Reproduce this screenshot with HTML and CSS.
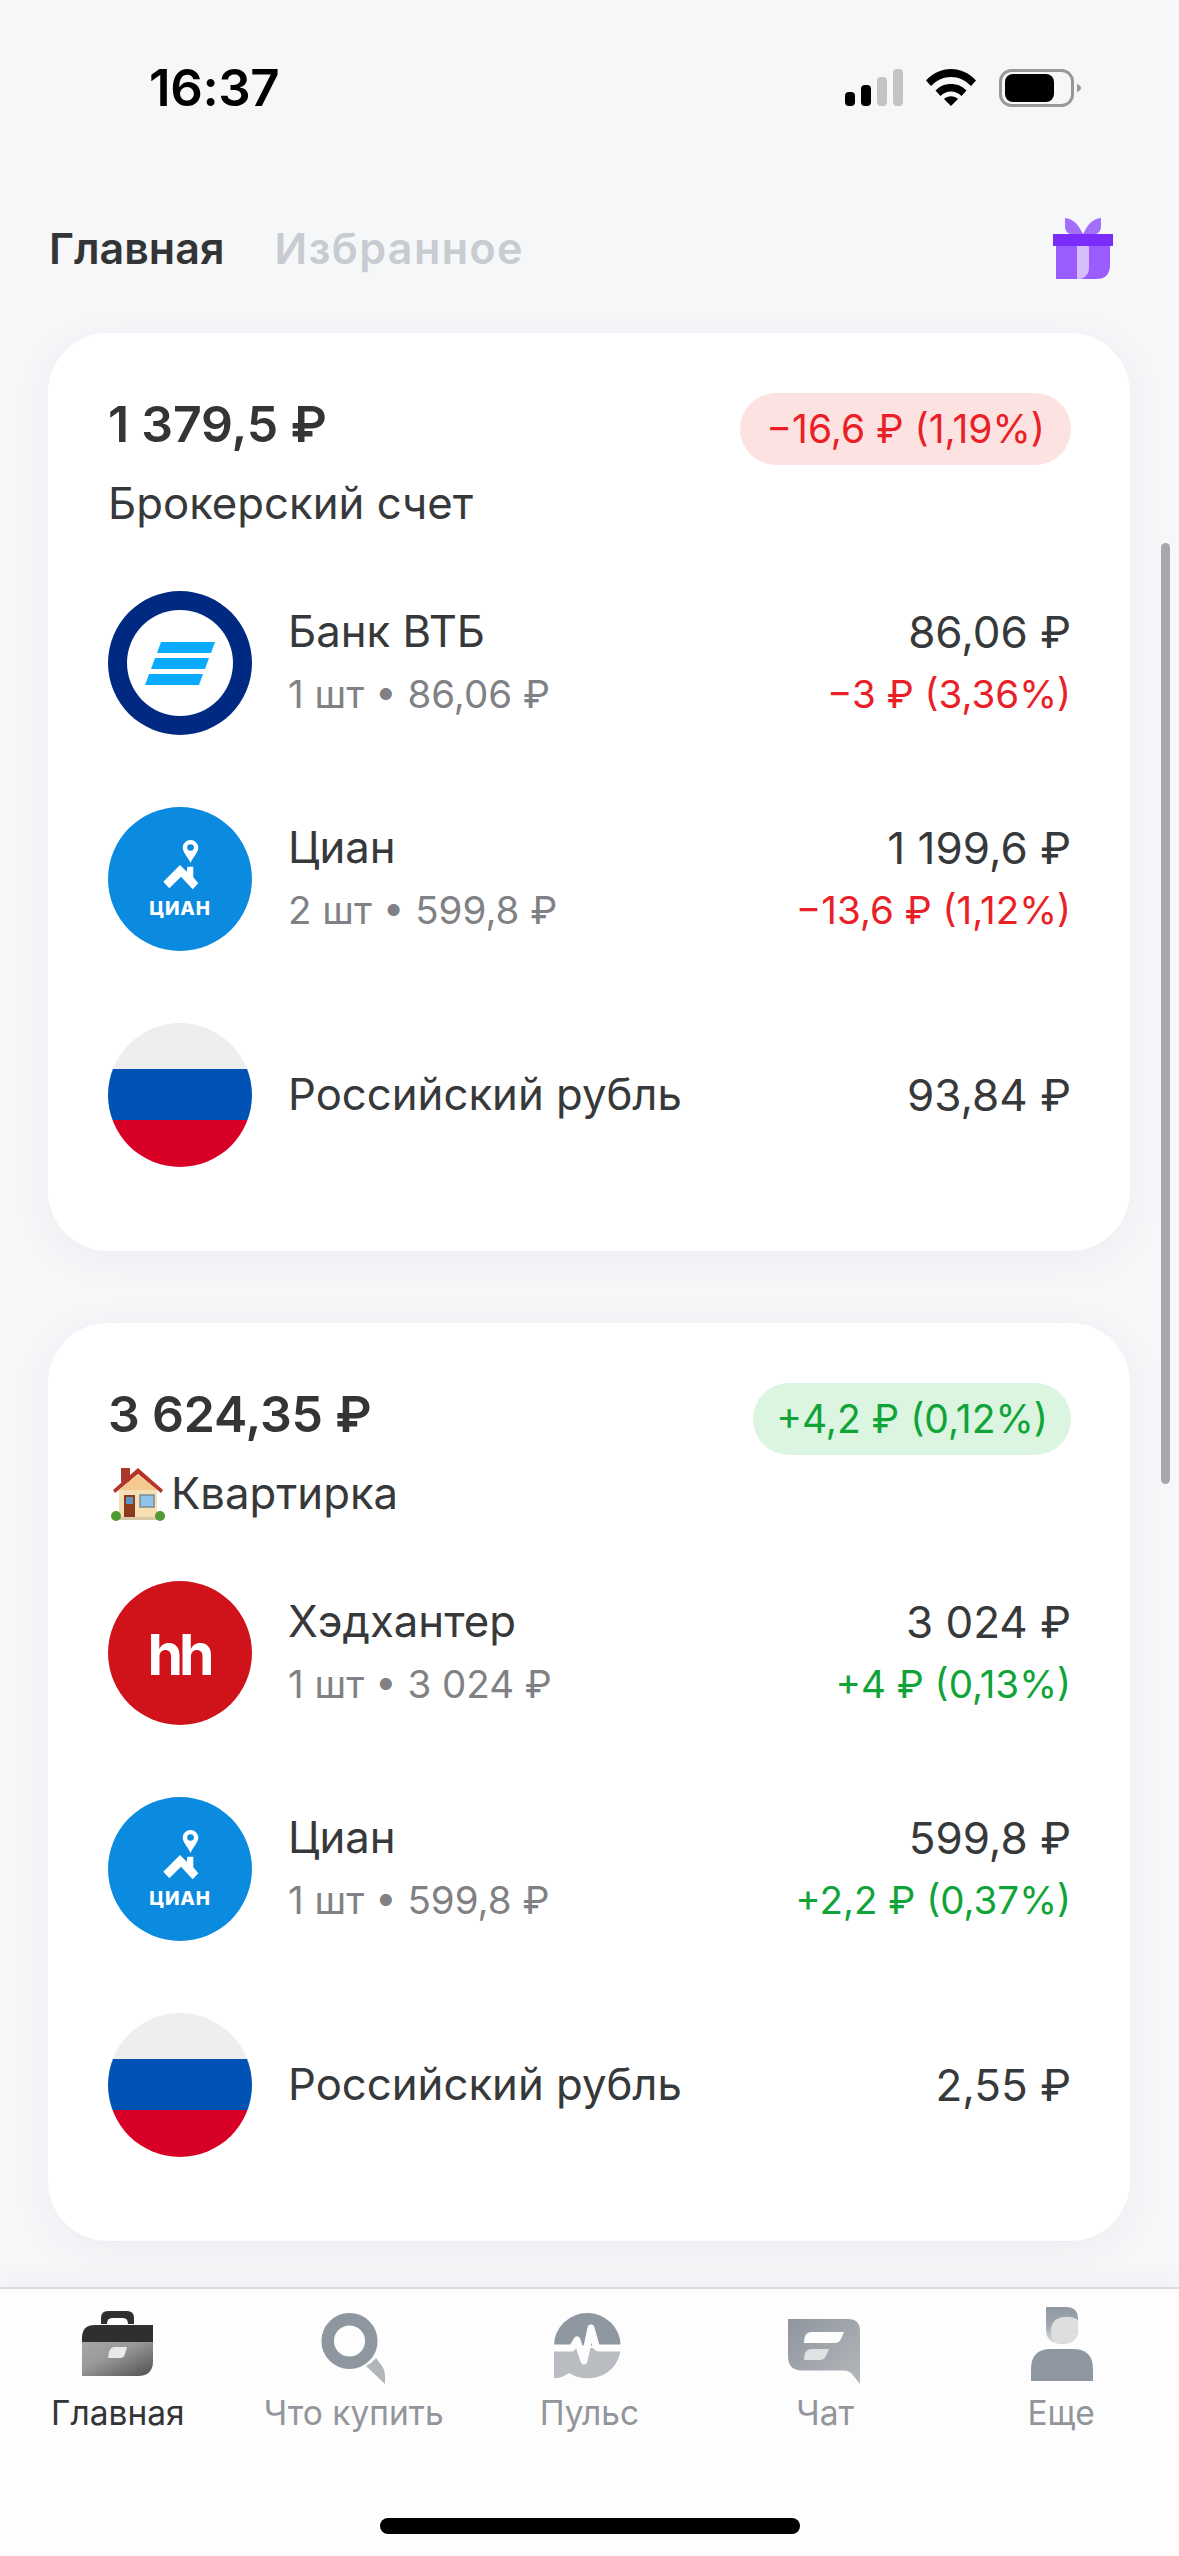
FILE: index.html
```html
<!DOCTYPE html>
<html lang="ru">
<head>
<meta charset="utf-8">
<title>Главная</title>
<link rel="stylesheet" href="styles.css">
</head>
<body>
<div class="app">
  <header class="status">
    <span class="time">16:37</span>
    <div class="status-icons">
      <svg class="signal" width="58" height="37" viewBox="0 0 58 37"><rect x="0" y="23" width="10" height="14" rx="4" fill="#000"/><rect x="16" y="16" width="10" height="21" rx="4" fill="#000"/><rect x="32" y="8" width="10" height="29" rx="4" fill="#c4c4c6"/><rect x="48" y="0" width="10" height="37" rx="4" fill="#c4c4c6"/></svg>
      <svg class="wifi" width="50" height="37" viewBox="0 0 50 37"><path d="M0 11.5C7 4 15.500 0 25 0s18 4 25 11.500l-5 5.500C39 11 32.500 8 25 8S11 11 5 17z" fill="#000"/><path d="M9.500 21.500C14 17 19 15 25 15s11 2 15.500 6.500l-5 5.500C32.500 24 29 22.500 25 22.500S17.500 24 14.500 27z" fill="#000"/><path d="M18 30c2-1.700 4.300-2.700 7-2.700s5 1 7 2.700l-7 7z" fill="#000"/></svg>
      <svg class="battery" width="82" height="38" viewBox="0 0 82 38"><rect x="1.500" y="1.500" width="72" height="35" rx="11" fill="none" stroke="#98989b" stroke-width="3"/><rect x="6" y="5" width="49" height="28" rx="8" fill="#000"/><path d="M78 15q4 1.500 4 4t-4 4z" fill="#98989b"/></svg>
    </div>
  </header>

  <nav class="tabs">
    <span class="tab tab-active">Главная</span>
    <span class="tab tab-muted">Избранное</span>
    <svg class="gift" width="60" height="61" viewBox="0 0 60 61"><path d="M12 0c5 0 11 4 14 9l4 7H18C14 16 12 12 12 8zM48 0c-5 0-11 4-14 9l-4 7h12c4 0 6-4 6-8z" fill="#a26ffb"/><path d="M3 28h54v19q0 14-14 14H3z" fill="#9a5bff"/><rect x="24" y="28" width="12" height="33" fill="#d6bdfd"/><path d="M36 28v22q0 8-8 11h9q2-1 2-4V28z" fill="#9a5bff"/><rect x="0" y="16" width="60" height="12" fill="#7b2cfb"/></svg>
  </nav>

  <main class="feed">
    <section class="card">
      <div class="card-head">
        <div class="head-main">
          <div class="total">1 379,5 ₽</div>
          <div class="label">Брокерский счет</div>
        </div>
        <span class="badge badge-red">−16,6 ₽ (1,19%)</span>
      </div>
      <div class="rows">
        <div class="row">
          <svg class="logo" viewBox="0 0 144 144"><circle cx="72" cy="72" r="72" fill="#002a82"/><circle cx="72" cy="72" r="53" fill="#fff"/><path d="M53 51h54l-4 11H49zM47 67h54l-4 11H43zM41 83h54l-4 11H37z" fill="#0aabff"/></svg>
          <div class="info"><div class="name">Банк ВТБ</div><div class="sub">1 шт • 86,06 ₽</div></div>
          <div class="nums"><div class="value">86,06 ₽</div><div class="delta red">−3 ₽ (3,36%)</div></div>
        </div>
        <div class="row">
          <svg class="logo" viewBox="0 0 144 144"><circle cx="72" cy="72" r="72" fill="#0a8be0"/><path d="M82.500 33a7.800 7.800 0 0 1 7.800 7.800c0 5-5.300 9-7.800 15.200-2.500-6.200-7.800-10.200-7.800-15.200a7.800 7.800 0 0 1 7.800-7.800z" fill="#fff"/><circle cx="82.500" cy="40.500" r="3.300" fill="#0a8be0"/><path d="M55.300 74.700L72 58l6.700 6.700.6-5h6v10.600l5 6-5.600 6L73 69.700 61.300 81.300z" fill="#fff"/><text class="cian-text" x="72" y="108" text-anchor="middle">ЦИАН</text></svg>
          <div class="info"><div class="name">Циан</div><div class="sub">2 шт • 599,8 ₽</div></div>
          <div class="nums"><div class="value">1 199,6 ₽</div><div class="delta red">−13,6 ₽ (1,12%)</div></div>
        </div>
        <div class="row">
          <svg class="logo" viewBox="0 0 144 144"><clipPath id="f1"><circle cx="72" cy="72" r="72"/></clipPath><g clip-path="url(#f1)"><rect width="144" height="46" fill="#eeeeee"/><rect y="46" width="144" height="51" fill="#0052b4"/><rect y="97" width="144" height="47" fill="#d80027"/></g></svg>
          <div class="info"><div class="name">Российский рубль</div></div>
          <div class="nums"><div class="value">93,84 ₽</div></div>
        </div>
      </div>
    </section>

    <section class="card">
      <div class="card-head">
        <div class="head-main">
          <div class="total">3 624,35 ₽</div>
          <div class="label label-icon"><svg class="house" width="56" height="54" viewBox="0 0 56 54"><rect x="11" y="1" width="9" height="14" fill="#a8392b"/><rect x="9" y="22" width="38" height="28" fill="#f6dfb4"/><path d="M28 1L3 23l2 3L28 7l23 19 2-3z" fill="#b5342a"/><path d="M28 7L9 23h38z" fill="#f3c98e"/><rect x="14" y="28" width="11" height="22" fill="#8a3b1c"/><rect x="16" y="30" width="7" height="7" fill="#5f94c8"/><rect x="30" y="28" width="14" height="12" fill="#8fc3ea" stroke="#7c8a94" stroke-width="1.500"/><rect x="9" y="50" width="38" height="3" fill="#d9c8a6"/><circle cx="6" cy="49" r="5" fill="#4f9a33"/><circle cx="50" cy="49" r="5" fill="#4f9a33"/></svg><span>Квартирка</span></div>
        </div>
        <span class="badge badge-green">+4,2 ₽ (0,12%)</span>
      </div>
      <div class="rows">
        <div class="row">
          <svg class="logo" viewBox="0 0 144 144"><circle cx="72" cy="72" r="72" fill="#d0121b"/><text class="hh-text" x="71" y="94" text-anchor="middle">hh</text></svg>
          <div class="info"><div class="name">Хэдхантер</div><div class="sub">1 шт • 3 024 ₽</div></div>
          <div class="nums"><div class="value">3 024 ₽</div><div class="delta green">+4 ₽ (0,13%)</div></div>
        </div>
        <div class="row">
          <svg class="logo" viewBox="0 0 144 144"><circle cx="72" cy="72" r="72" fill="#0a8be0"/><path d="M82.500 33a7.800 7.800 0 0 1 7.800 7.800c0 5-5.300 9-7.800 15.200-2.500-6.200-7.800-10.200-7.800-15.200a7.800 7.800 0 0 1 7.800-7.800z" fill="#fff"/><circle cx="82.500" cy="40.500" r="3.300" fill="#0a8be0"/><path d="M55.300 74.700L72 58l6.700 6.700.6-5h6v10.600l5 6-5.600 6L73 69.700 61.300 81.300z" fill="#fff"/><text class="cian-text" x="72" y="108" text-anchor="middle">ЦИАН</text></svg>
          <div class="info"><div class="name">Циан</div><div class="sub">1 шт • 599,8 ₽</div></div>
          <div class="nums"><div class="value">599,8 ₽</div><div class="delta green">+2,2 ₽ (0,37%)</div></div>
        </div>
        <div class="row">
          <svg class="logo" viewBox="0 0 144 144"><clipPath id="f2"><circle cx="72" cy="72" r="72"/></clipPath><g clip-path="url(#f2)"><rect width="144" height="46" fill="#eeeeee"/><rect y="46" width="144" height="51" fill="#0052b4"/><rect y="97" width="144" height="47" fill="#d80027"/></g></svg>
          <div class="info"><div class="name">Российский рубль</div></div>
          <div class="nums"><div class="value">2,55 ₽</div></div>
        </div>
      </div>
    </section>
  </main>

  <div class="scrollbar"></div>

  <footer class="tabbar">
    <div class="tb-item tb-active">
      <svg class="tb-icon" viewBox="0 0 90 84"><defs><linearGradient id="g1" x1="0" y1="0" x2="1" y2="1"><stop offset="0" stop-color="#a6a6a6"/><stop offset="0.4" stop-color="#999"/><stop offset="1" stop-color="#505050"/></linearGradient></defs><path d="M28 16v-6q0-7 7-7h19q7 0 7 7v6h-6q0-6-5-6H39q-5 0-5 6z" fill="#2e2f31"/><path d="M9 34v-4q0-13 13-13h58v17z" fill="#2e2f31"/><path d="M9 34h71v19q0 15-15 15H9z" fill="url(#g1)"/><path d="M41 39h13l-2 7q-1 4-5 4H35q1-11 6-11z" fill="#e8e9ea"/></svg>
      <span>Главная</span>
    </div>
    <div class="tb-item">
      <svg class="tb-icon" viewBox="0 0 90 84"><path d="M57 58q6-3 10-8l6 8q3 4 3 9v9z" fill="#b0b5ba"/><circle cx="40.500" cy="33" r="21.800" fill="none" stroke="#8e969f" stroke-width="12.500"/></svg>
      <span>Что купить</span>
    </div>
    <div class="tb-item">
      <svg class="tb-icon" viewBox="0 0 90 84"><path d="M10 37.500a33.300 32.500 0 0 1 66.600 0z" fill="#8f98a1"/><path d="M10 40h66.600c-1 18-15 30.300-33 30.300-7 0-13-2-18.600-5.300-5 3.500-10 5.300-15 5.300z" fill="#b9bdc2"/><path d="M9 40h19l5-8 7 21 7-33 5 18q1 2 4 2h22" fill="none" stroke="#fdfdfe" stroke-width="7" stroke-linejoin="round"/></svg>
      <span>Пульс</span>
    </div>
    <div class="tb-item">
      <svg class="tb-icon" viewBox="0 0 90 84"><defs><linearGradient id="g2" x1="0" y1="0" x2="1" y2="1"><stop offset="0" stop-color="#8f969e"/><stop offset="1" stop-color="#b3b7bb"/></linearGradient></defs><path d="M8 11h60q12 0 12 12v53l-8-10q-3-3.500-8-3.500H22Q8 62.500 8 48z" fill="url(#g2)"/><path d="M31 24h33l-3 7q-2 4-6 4H24q0-11 7-11z" fill="#fdfdfe"/><path d="M31 41h18l-3 7q-2 4-6 4H24q0-11 7-11z" fill="#dfe1e3"/></svg>
      <span>Чат</span>
    </div>
    <div class="tb-item">
      <svg class="tb-icon tb-overflow" viewBox="0 0 90 84"><defs><linearGradient id="g3" x1="0" y1="0" x2="0" y2="1"><stop offset="0" stop-color="#8f98a1"/><stop offset="0.5" stop-color="#a0a7ae"/><stop offset="1" stop-color="#dfe1e3"/></linearGradient></defs><path d="M30 -1h20q12 0 12 12v10q0 15-16 15T30 21z" fill="url(#g3)"/><path d="M35 21q1-11 13-12 8-1 14 3v9q0 15-16 15-11 0-11-11z" fill="#dcdee0"/><path d="M15 73V61q0-20 20-20h22q20 0 20 20v12z" fill="#8f98a1"/></svg>
      <span>Еще</span>
    </div>
    <div class="home-bar"></div>
  </footer>
</div>
</body>
</html>
```
FILE: styles.css
```css
* { box-sizing: border-box; }
html, body { margin: 0; padding: 0; }
body {
  width: 1179px;
  height: 2556px;
  overflow: hidden;
  background: #f6f7f9;
  font-family: Inter, "Noto Sans", "Liberation Sans", sans-serif;
  color: #333436;
}
.app { position: relative; display: flex; flex-direction: column; height: 2556px; }

.status { display: flex; justify-content: space-between; align-items: center; height: 175px; padding: 0 98px 0 149px; }
.time { font-size: 51px; font-weight: 600; color: #000; letter-spacing: -0.4px; }
.status-icons { display: flex; align-items: center; gap: 23px; }

.tabs { display: flex; align-items: center; gap: 50px; height: 100px; margin-top: 23px; padding: 0 66px 0 49px; }
.tab { font-size: 43px; font-weight: 600; color: #c8cbcf; }
.tab-active { color: #333436; }
.tab-muted { letter-spacing: 1.4px; }
.gift { margin-left: auto; }

.feed { flex: 1; min-height: 0; overflow: hidden; display: flex; flex-direction: column; gap: 72px; padding: 35px 49px 0 48px; }
.card { background: #fff; border-radius: 60px; padding: 60px 59px 84px 60px; box-shadow: 0 8px 40px rgba(40, 50, 70, 0.05); flex: none; }
.card-head { display: flex; justify-content: space-between; align-items: flex-start; margin-bottom: 57px; }
.total { font-size: 50px; font-weight: 600; line-height: 63px; letter-spacing: -0.2px; }
.label { font-size: 43.7px; line-height: 60px; margin-top: 18px; color: #37383a; }
.label-icon { display: flex; align-items: center; gap: 5px; margin-left: 2px; }
.house { flex: none; }
.badge { font-size: 39px; height: 72px; line-height: 72px; padding: 0 26px; border-radius: 36px; }
.badge-red { background: #fde2e2; color: #ea2027; }
.badge-green { background: #dcf5e0; color: #10a337; padding: 0 23px; }

.rows { display: flex; flex-direction: column; gap: 72px; }
.row { display: flex; align-items: center; gap: 36px; height: 144px; }
.logo { width: 144px; height: 144px; flex: none; }
.info { flex: 1; min-width: 0; }
.name { font-size: 43.7px; line-height: 62px; color: #37383a; }
.sub { font-size: 38.5px; line-height: 62px; color: #7f8184; }
.nums { text-align: right; }
.value { font-size: 44px; line-height: 62px; color: #37383a; }
.delta { font-size: 38.5px; line-height: 62px; }
.red { color: #ea2027; }
.green { color: #10a337; }
.cian-text { font-family: Inter, sans-serif; font-size: 19px; font-weight: 800; fill: #fff; letter-spacing: 0.8px; }
.hh-text { font-family: Inter, sans-serif; font-size: 57px; font-weight: 700; fill: #fff; letter-spacing: -4px; }

.scrollbar { position: absolute; left: 1161px; top: 543px; width: 9px; height: 941px; border-radius: 5px; background: #a6a8ab; }

.tabbar { position: relative; flex: none; height: 269px; display: grid; grid-template-columns: repeat(5, 1fr); align-items: start; border-top: 2px solid #dadbdd; background: #fdfdfe; padding-top: 19px; box-shadow: 0 -14px 20px rgba(60, 70, 90, 0.02); }
.tb-item { display: flex; flex-direction: column; align-items: center; font-size: 33.5px; color: #92969b; }
.tb-item span { line-height: 40px; margin-top: 1px; }
.tb-active { color: #333436; }
.tb-icon { width: 90px; height: 84px; overflow: visible; }
.home-bar { position: absolute; left: 380px; top: 229px; width: 420px; height: 16px; border-radius: 8px; background: #000; }
```
